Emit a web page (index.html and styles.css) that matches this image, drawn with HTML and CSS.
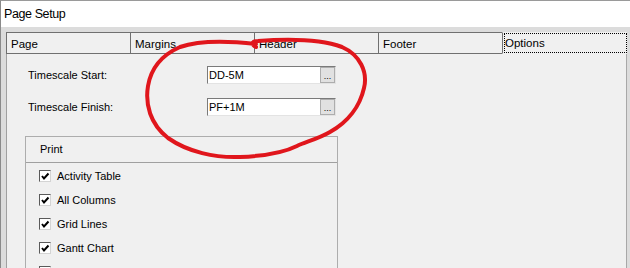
FILE: index.html
```html
<!DOCTYPE html>
<html lang="en">
<head>
    <meta charset="UTF-8">
    <meta name="viewport" content="width=device-width, initial-scale=1.0">
    <title>Page Setup</title>
    <link rel="stylesheet" href="styles.css">
</head>
<body>

<div class="window">
    <div class="titlebar">Page Setup</div>

    <div class="dialog">
        <div class="tabs">
            <div class="tab">Page</div>
            <div class="tab">Margins</div>
            <div class="tab">Header</div>
            <div class="tab">Footer</div>
            <div class="tab tab-active"><span class="focus">Options</span></div>
        </div>

        <div class="panel">
            <div class="field">
                <label class="field-label">Timescale Start:</label>
                <div class="picker">
                    <span class="picker-value">DD-5M</span>
                    <span class="picker-btn">...</span>
                </div>
            </div>
            <div class="field">
                <label class="field-label">Timescale Finish:</label>
                <div class="picker">
                    <span class="picker-value">PF+1M</span>
                    <span class="picker-btn">...</span>
                </div>
            </div>

            <div class="group">
                <div class="group-header">Print</div>
                <div class="group-body">
                    <div class="check"><span class="checkbox"><svg viewBox="0 0 10 10"><polyline points="2,5 4,7.5 8.5,2.5"/></svg></span>Activity Table</div>
                    <div class="check"><span class="checkbox"><svg viewBox="0 0 10 10"><polyline points="2,5 4,7.5 8.5,2.5"/></svg></span>All Columns</div>
                    <div class="check"><span class="checkbox"><svg viewBox="0 0 10 10"><polyline points="2,5 4,7.5 8.5,2.5"/></svg></span>Grid Lines</div>
                    <div class="check"><span class="checkbox"><svg viewBox="0 0 10 10"><polyline points="2,5 4,7.5 8.5,2.5"/></svg></span>Gantt Chart</div>
                    <div class="check"><span class="checkbox"></span></div>
                </div>
            </div>
        </div>
    </div>

    <!-- hand drawn red marker around the timescale fields -->
    <svg class="annotation" viewBox="0 0 630 268">
        <path d="M 256 47 C 252 45, 251 41, 258 41
                 C 285 39, 320 39, 342 47
                 C 360 55, 368 72, 364 88
                 C 360 106, 348 122, 330 132
                 C 318 139, 305 142, 297 146
                 C 285 152, 265 156, 240 157
                 C 215 158, 188 152, 168 138
                 C 150 124, 145 104, 148 86
                 C 151 68, 162 55, 180 47
                 C 200 40, 230 41, 256 44"/>
    </svg>
</div>

</body>
</html>
```

FILE: styles.css
```css
body {
    margin: 0;
    font-family: "Liberation Sans", Arial, sans-serif;
    font-size: 11px;
    color: #000;
    background-color: #dcdcdc;
}
.window {
    position: relative;
    width: 630px;
    height: 268px;
    overflow: hidden;
    box-sizing: border-box;
    border-top: 1px solid #9a9a9a;
    border-left: 1px solid #8a8a8a;
}
.titlebar {
    height: 26px;
    line-height: 27px;
    padding-left: 3px;
    background: white;
    font-size: 12.5px;
    letter-spacing: -0.4px;
}
.dialog {
    padding: 5px 0 0 5px;
}
.tabs {
    display: flex;
}
.tab {
    width: 124px;
    height: 22px;
    box-sizing: border-box;
    padding: 5px 0 0 4px;
    line-height: 13px;
    font-size: 11.5px;
    border: 1px solid #707070;
    border-right: none;
    background-color: #f0f0f0;
}
.tab-active {
    width: 125px;
    padding: 0 0 0 1px;
    border-top-color: transparent;
    border-bottom-color: transparent;
}
.focus {
    display: block;
    height: 20px;
    box-sizing: border-box;
    padding-top: 3px;
    border: 1px dotted #000;
}
.panel {
    width: 621px;
    height: 230px;
    box-sizing: border-box;
    padding: 12px 0 0 18px;
    border-left: 1px solid #a0a0a0;
    border-right: 1px solid #a8a8a8;
    background-color: #f0f0f0;
}
.field {
    display: flex;
    align-items: center;
    height: 18px;
    margin-bottom: 14px;
    padding-left: 3px;
}
.field-label {
    width: 179px;
}
.picker {
    display: flex;
    align-items: center;
    width: 129px;
    height: 18px;
    box-sizing: border-box;
    border: 1px solid;
    border-color: #7a7a7a #e3e3e3 #e3e3e3 #7a7a7a;
    background: white;
}
.picker-value {
    padding-left: 1px;
}
.picker-btn {
    margin-left: auto;
    width: 15px;
    height: 16px;
    box-sizing: border-box;
    border: 1px solid #adadad;
    background-color: #e1e1e1;
    font-size: 9px;
    line-height: 17px;
    text-align: center;
}
.group {
    width: 313px;
    margin-top: 20px;
    box-sizing: border-box;
    border: 1px solid #adadad;
}
.group-header {
    height: 25px;
    line-height: 25px;
    padding-left: 14px;
    border-bottom: 1px solid #a0a0a0;
}
.group-body {
    padding-top: 1px;
}
.check {
    display: flex;
    align-items: center;
    height: 24px;
    padding-left: 13px;
}
.checkbox {
    width: 12px;
    height: 12px;
    margin-right: 6px;
    box-sizing: border-box;
    border: 1px solid;
    border-color: #5a5a5a #d4d4d4 #d4d4d4 #5a5a5a;
    background: white;
}
.checkbox svg {
    display: block;
    width: 10px;
    height: 10px;
}
.checkbox polyline {
    fill: none;
    stroke: #000;
    stroke-width: 2;
}
.annotation {
    position: absolute;
    left: -1px;
    top: -1px;
    width: 630px;
    height: 268px;
    pointer-events: none;
}
.annotation path {
    fill: none;
    stroke: #e0161c;
    stroke-width: 4;
    stroke-linecap: round;
    stroke-linejoin: round;
}
```
